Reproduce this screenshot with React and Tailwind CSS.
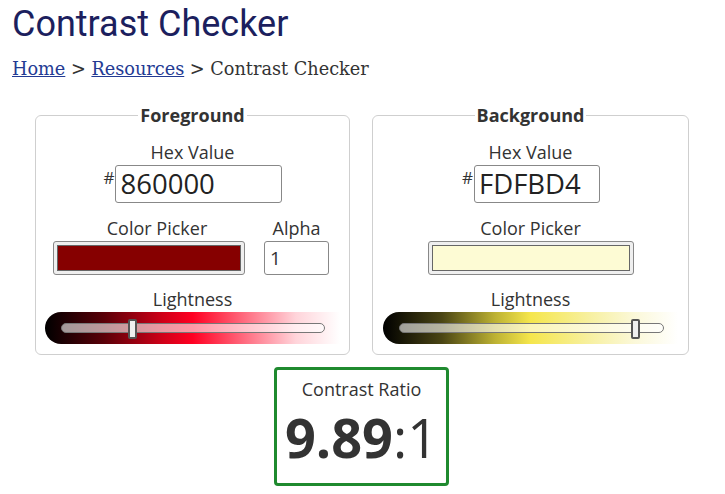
export default function App() {
  const sans = { fontFamily: '"Open Sans", sans-serif' };
  return (
    <div className="w-[725px] h-[494px] bg-white overflow-hidden text-[#333]" style={sans}>
      <h1 className="pl-3 text-[36px] leading-[48px] text-[#1c1f5e]" style={{ fontFamily: 'Roboto, sans-serif' }}>
        Contrast Checker
      </h1>
      <div className="pl-3 mt-[9px] text-[17.7px] leading-[24px] text-[#333]" style={{ fontFamily: '"DejaVu Serif", serif' }}>
        <a className="text-[#233a93] underline">Home</a> &gt; <a className="text-[#233a93] underline">Resources</a> &gt; Contrast Checker
      </div>
      <div className="flex gap-[22px] mt-[24px] pl-[35px]">
        {/* Foreground */}
        <fieldset className="w-[315px] border border-[#cfcfcf] rounded-[6px] px-[10px] pb-[10px]">
          <legend className="mx-auto px-[2px] font-bold text-[18px] leading-[20px] text-[#333]">Foreground</legend>
          <div className="text-center text-[18px] leading-[24px] mt-[15px]">Hex Value</div>
          <div className="flex justify-center items-start mt-[1px] pl-[1px]">
            <span className="text-[17px] leading-[17px] mt-[4px] mr-[1px]">#</span>
            <div className="w-[167px] h-[38px] border border-[#888] rounded-[3px] pl-[4px] text-[27.5px] leading-[36px] text-[#222]">860000</div>
          </div>
          <div className="flex justify-center gap-[19px] mt-[13px] pr-[3px]">
            <div className="flex flex-col items-center">
              <div className="text-[18px] leading-[24px] pl-[16px]">Color Picker</div>
              <div className="w-[192px] h-[34px] border border-[#888] rounded-[3px] bg-[#efefef] p-[3px] mt-[1px]">
                <div className="w-full h-full bg-[#860000] border border-[#666]"></div>
              </div>
            </div>
            <div className="flex flex-col items-center">
              <div className="text-[18px] leading-[24px]">Alpha</div>
              <div className="w-[65px] h-[34px] border border-[#888] rounded-[3px] pl-[5px] text-[19px] leading-[32px] mt-[1px]">1</div>
            </div>
          </div>
          <div className="text-center text-[18px] leading-[24px] mt-[12px]">Lightness</div>
          <div className="relative h-[32px] mt-[1px] ml-[-1px] mr-[-1px] rounded-l-full bg-[linear-gradient(to_right,#000_0%,#5a0008_20%,#d00018_40%,#ff0022_50%,#ff7a8c_70%,#ffd4da_85%,#fff_100%)]">
            <div className="absolute left-[16px] right-[15px] top-[11px] h-[10px] rounded-full border border-[#777] bg-white/60"></div>
            <div className="absolute left-[83px] top-[7px] w-[9px] h-[20px] rounded-[2px] border-2 border-[#555] bg-[#efefef]"></div>
          </div>
        </fieldset>
        {/* Background */}
        <fieldset className="w-[317px] border border-[#cfcfcf] rounded-[6px] px-[10px] pb-[10px]">
          <legend className="mx-auto px-[2px] font-bold text-[18px] leading-[20px] text-[#333]">Background</legend>
          <div className="text-center text-[18px] leading-[24px] mt-[15px]">Hex Value</div>
          <div className="flex justify-center items-start mt-[1px] pl-[1px]">
            <span className="text-[17px] leading-[17px] mt-[4px] mr-[1px]">#</span>
            <div className="w-[126px] h-[38px] border border-[#888] rounded-[3px] pl-[4px] text-[27.5px] leading-[36px] text-[#222]">FDFBD4</div>
          </div>
          <div className="flex justify-center mt-[13px]">
            <div className="flex flex-col items-center">
              <div className="text-[18px] leading-[24px]">Color Picker</div>
              <div className="w-[206px] h-[34px] border border-[#888] rounded-[3px] bg-[#efefef] p-[3px] mt-[1px]">
                <div className="w-full h-full bg-[#fdfbd4] border border-[#666]"></div>
              </div>
            </div>
          </div>
          <div className="text-center text-[18px] leading-[24px] mt-[12px]">Lightness</div>
          <div className="relative h-[32px] mt-[1px] rounded-l-full bg-[linear-gradient(to_right,#000_0%,#4a4514_20%,#bdb233_38%,#f5e64c_50%,#f7f0a0_70%,#fbf8d8_85%,#fff_100%)]">
            <div className="absolute left-[16px] right-[14px] top-[11px] h-[10px] rounded-full border border-[#777] bg-white/60"></div>
            <div className="absolute left-[248px] top-[7px] w-[9px] h-[20px] rounded-[2px] border-2 border-[#555] bg-[#efefef]"></div>
          </div>
        </fieldset>
      </div>
      <div className="flex mt-[12px] pl-[274px]">
        <div className="w-[175px] h-[119px] border-[3px] border-[#1f8a2f] rounded-[4px] flex flex-col items-center">
          <div className="text-[18px] leading-[24px] mt-[7px]">Contrast Ratio</div>
          <div className="text-[54px] leading-[60px] mt-[6px] text-[#333]">
            <span className="font-bold">9.89</span>:1
          </div>
        </div>
      </div>
    </div>
  );
}
